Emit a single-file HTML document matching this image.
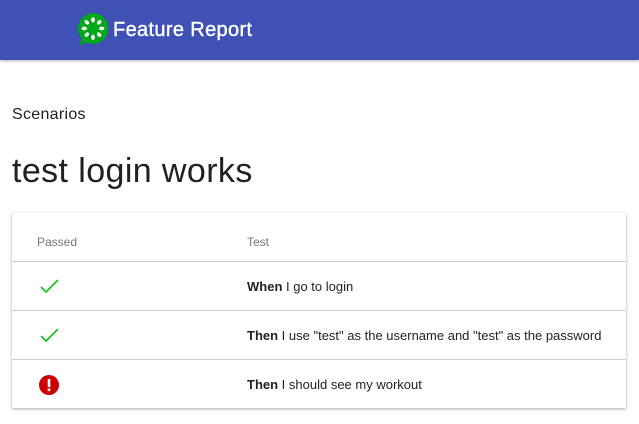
<!DOCTYPE html>
<html><head><style>
body{margin:0;width:639px;height:424px;overflow:hidden;background:#fff;font-family:"Liberation Sans",Arial,sans-serif;}
.hdr{position:absolute;left:0;top:0;width:639px;height:60px;background:#3f51b5;box-shadow:0 1px 3px rgba(0,0,0,.3);}
.ttl{position:absolute;left:113px;top:19px;color:#fff;font-size:20px;letter-spacing:.35px;-webkit-text-stroke:.4px #fff;}
.sc{position:absolute;left:12px;top:106px;font-size:16px;color:#222;letter-spacing:.3px;}
h1{position:absolute;left:12px;top:152px;margin:0;font-weight:normal;font-size:34px;color:#212121;letter-spacing:.4px;}
.tbl{position:absolute;left:12px;top:213px;width:614px;height:195px;box-shadow:0 1px 3px rgba(0,0,0,.35);background:#fff;}
.row{position:absolute;left:0;width:614px;border-top:1px solid #ccc;height:48px;}
.c1{position:absolute;left:25px;}
.c2{position:absolute;left:235px;font-size:13px;color:#222;}
.h{font-size:12px;color:#777;top:22px;}
</style></head><body>
<div class="hdr">
<svg style="position:absolute;left:75px;top:11px" width="36" height="37" viewBox="0 0 34 36">
<path d="M17 2a15 15 0 1 1-7 28.3L4 34l1.8-7.5A15 15 0 0 1 17 2z" fill="#00a818"/>
<g fill="#fff">
<ellipse cx="17" cy="8.5" rx="1.8" ry="2.6"/>
<ellipse cx="17" cy="25.5" rx="1.8" ry="2.6"/>
<ellipse cx="8.5" cy="17" rx="2.6" ry="1.8"/>
<ellipse cx="25.5" cy="17" rx="2.6" ry="1.8"/>
<ellipse cx="11" cy="11" rx="1.8" ry="2.6" transform="rotate(-45 11 11)"/>
<ellipse cx="23" cy="11" rx="1.8" ry="2.6" transform="rotate(45 23 11)"/>
<ellipse cx="11" cy="23" rx="1.8" ry="2.6" transform="rotate(45 11 23)"/>
<ellipse cx="23" cy="23" rx="1.8" ry="2.6" transform="rotate(-45 23 23)"/>
</g></svg>
<div class="ttl">Feature Report</div>
</div>
<div class="sc">Scenarios</div>
<h1>test login works</h1>
<div class="tbl">
<div class="c1 h">Passed</div><div class="c2 h">Test</div>
<div class="row" style="top:48px">
<svg class="c1" style="top:17px;left:28px" width="19" height="15" viewBox="0 0 19 15"><path d="M1 8l5 5L18 1" fill="none" stroke="#1ec31e" stroke-width="1.8"/></svg>
<div class="c2" style="top:17px"><b>When</b> I go to login</div></div>
<div class="row" style="top:97px">
<svg class="c1" style="top:17px;left:28px" width="19" height="15" viewBox="0 0 19 15"><path d="M1 8l5 5L18 1" fill="none" stroke="#1ec31e" stroke-width="1.8"/></svg>
<div class="c2" style="top:17px"><b>Then</b> I use "test" as the username and "test" as the password</div></div>
<div class="row" style="top:146px">
<svg class="c1" style="top:14px;left:26px" width="22" height="22" viewBox="0 0 22 22"><circle cx="11" cy="11" r="10" fill="#cc0000"/><rect x="9.7" y="5" width="2.6" height="8" fill="#fff"/><rect x="9.7" y="14.5" width="2.6" height="2.6" fill="#fff"/></svg>
<div class="c2" style="top:17px"><b>Then</b> I should see my workout</div></div>
</div>
</body></html>
